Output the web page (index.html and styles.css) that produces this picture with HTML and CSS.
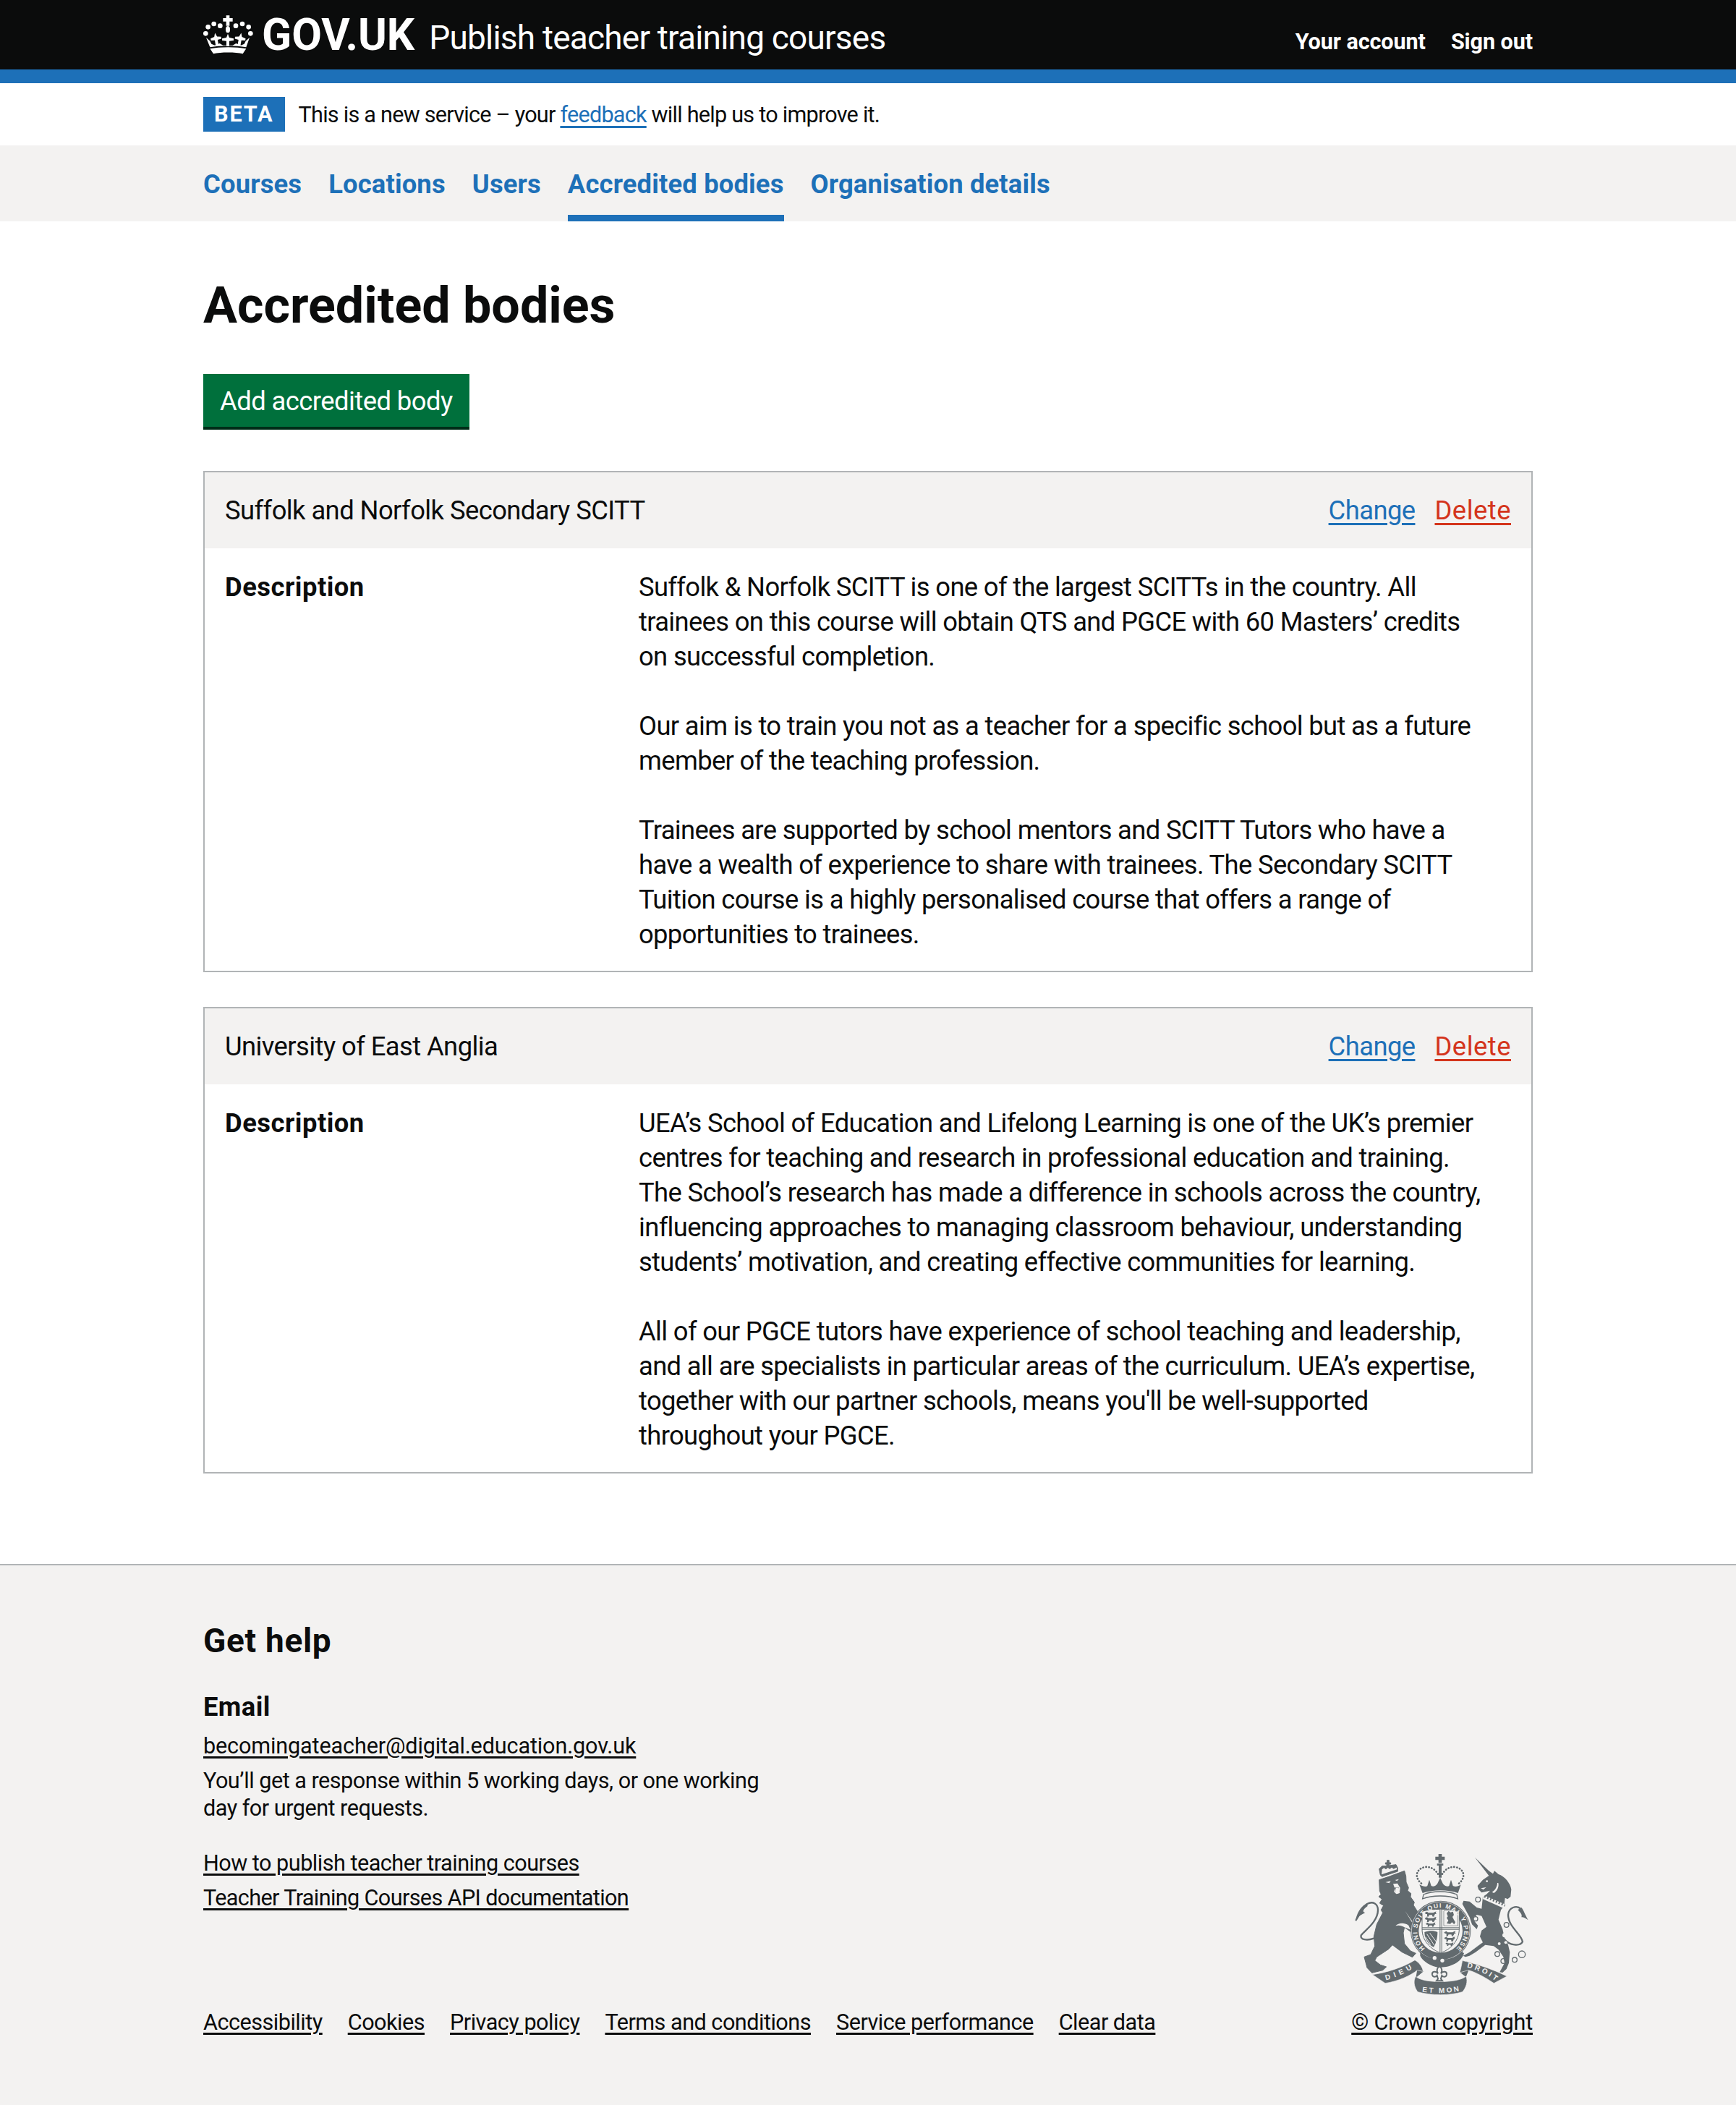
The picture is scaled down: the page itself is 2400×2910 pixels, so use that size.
FILE: index.html
```html
<!DOCTYPE html>
<html lang="en">
<head>
<meta charset="utf-8">
<title>Accredited bodies - Publish teacher training courses - GOV.UK</title>
<link rel="stylesheet" href="styles.css">
</head>
<body>
<header class="site-header">
  <div class="wrap header-inner">
    <div class="brand">
      <svg class="crown" viewBox="18 15 216 168" aria-hidden="true">
        <g fill="#fff">
          <path d="M113 22h14v11h13v14h-13v18h-14V47h-13V33h13z"/>
          <ellipse cx="120" cy="80" rx="9" ry="14"/>
          <circle cx="38" cy="70" r="10"/><circle cx="62" cy="57" r="10"/><circle cx="88" cy="65" r="10"/>
          <circle cx="153" cy="65" r="10"/><circle cx="180" cy="57" r="10"/><circle cx="206" cy="70" r="10"/>
          <circle cx="28" cy="97" r="10"/><circle cx="214" cy="97" r="10"/>
          <path d="M120 98L126 114L144 118V126L126 128V150H114V128L96 126V118L114 114Z"/>
          <path transform="rotate(-10 72 125) translate(-48 -4)" d="M120 98L126 114L142 118V126L126 128V150H114V128L98 126V118L114 114Z"/>
          <path transform="rotate(10 170 125) translate(50 -4)" d="M120 98L126 114L142 118V126L126 128V150H114V128L98 126V118L114 114Z"/>
          <path d="M30 114l16 14 6 12 14 6 20-8 14 8h40l14-8 20 8 14-6 6-12 16-14-14 40c-40-8-110-8-150 0z"/>
          <path d="M46 160c40-8 110-8 150 0l-14 21c-30-7-92-7-122 0z"/>
        </g>
      </svg>
      <span class="logotype">GOV.UK</span>
      <span class="service-name">Publish teacher training courses</span>
    </div>
    <nav class="account-nav">
      <a href="#">Your account</a>
      <a href="#">Sign out</a>
    </nav>
  </div>
  <div class="header-rule"></div>
</header>

<div class="wrap phase">
  <strong class="tag">BETA</strong>
  <span>This is a new service – your <a class="link" href="#">feedback</a> will help us to improve it.</span>
</div>

<nav class="org-nav">
  <div class="wrap org-nav-inner">
    <a href="#">Courses</a>
    <a href="#">Locations</a>
    <a href="#">Users</a>
    <a href="#" class="current">Accredited bodies</a>
    <a href="#">Organisation details</a>
  </div>
</nav>

<main class="wrap main">
  <h1>Accredited bodies</h1>
  <a class="button" href="#">Add accredited body</a>

  <section class="card">
    <div class="card-head">
      <h2>Suffolk and Norfolk Secondary SCITT</h2>
      <div class="card-actions"><a class="link" href="#">Change</a><a class="link danger" href="#">Delete</a></div>
    </div>
    <dl class="card-body">
      <dt>Description</dt>
      <dd>
        <p>Suffolk &amp; Norfolk SCITT is one of the largest SCITTs in the country. All<br>trainees on this course will obtain QTS and PGCE with 60 Masters’ credits<br>on successful completion.</p>
        <p>Our aim is to train you not as a teacher for a specific school but as a future<br>member of the teaching profession.</p>
        <p>Trainees are supported by school mentors and SCITT Tutors who have a<br>have a wealth of experience to share with trainees. The Secondary SCITT<br>Tuition course is a highly personalised course that offers a range of<br>opportunities to trainees.</p>
      </dd>
    </dl>
  </section>

  <section class="card">
    <div class="card-head">
      <h2>University of East Anglia</h2>
      <div class="card-actions"><a class="link" href="#">Change</a><a class="link danger" href="#">Delete</a></div>
    </div>
    <dl class="card-body">
      <dt>Description</dt>
      <dd>
        <p>UEA’s School of Education and Lifelong Learning is one of the UK’s premier<br>centres for teaching and research in professional education and training.<br>The School’s research has made a difference in schools across the country,<br>influencing approaches to managing classroom behaviour, understanding<br>students’ motivation, and creating effective communities for learning.</p>
        <p>All of our PGCE tutors have experience of school teaching and leadership,<br>and all are specialists in particular areas of the curriculum. UEA’s expertise,<br>together with our partner schools, means you'll be well-supported<br>throughout your PGCE.</p>
      </dd>
    </dl>
  </section>
</main>

<footer class="footer">
  <div class="wrap footer-inner">
    <div class="footer-help">
      <h2>Get help</h2>
      <h3>Email</h3>
      <a class="flink flink-email" href="#">becomingateacher@digital.education.gov.uk</a>
      <p>You’ll get a response within 5 working days, or one working<br>day for urgent requests.</p>
      <ul class="footer-docs">
        <li><a class="flink" href="#">How to publish teacher training courses</a></li>
        <li><a class="flink flink-api" href="#">Teacher Training Courses API documentation</a></li>
      </ul>
    </div>
    <div class="footer-meta">
      <ul class="meta-links">
        <li><a class="flink" href="#">Accessibility</a></li>
        <li><a class="flink" href="#">Cookies</a></li>
        <li><a class="flink" href="#">Privacy policy</a></li>
        <li><a class="flink" href="#">Terms and conditions</a></li>
        <li><a class="flink" href="#">Service performance</a></li>
        <li><a class="flink" href="#">Clear data</a></li>
      </ul>
      <div class="copyright">
        <svg class="crest" viewBox="0 0 735 615" aria-hidden="true">
          <defs>
            <path id="garter" d="M300 410A97 97 0 1 1 430 410"/>
            <path id="ban-left" d="M138 541C178 531 215 514 246 494"/>
            <path id="ban-mid" d="M286 589C340 597 392 597 446 585"/>
            <path id="ban-right" d="M474 488C512 496 556 516 588 541"/>
            <symbol id="passant" viewBox="0 0 60 24">
              <path d="M2 6l10-5 6 5h22l8-4 6-2-3 8 5 3-8 1-2 6-4 4 5 2h-10l-2-8H22l-3 8h-9l3-4-1-8-6 0z"/>
            </symbol>
          </defs>

          <!-- lion -->
          <g fill="#626a6e" stroke="#626a6e" stroke-width="3" stroke-linejoin="round">
            <path d="M110 125L150 112L215 88L221 110L222 135L232 158L228 170L242 182L240 196L256 218L252 230L268 255L262 290L275 345L262 352L240 340L215 322L210 345L215 390L240 420L262 430L248 446L205 425L165 395L150 412L100 445L92 460L115 478L140 486L125 500L80 511L60 490L48 445L75 435L92 400L88 360L100 310L125 262L118 250L128 232L112 222L122 205L108 195L118 185L112 172Z"/>
            <path d="M115 105L110 80L122 68H140L142 60H136V54H143V44H151V54H158V60H151V66L180 62L187 76L187 90L122 112Z"/>
          </g>
          <g fill="none" stroke="#626a6e" stroke-width="7" stroke-linecap="round">
            <path d="M88 368C60 378 30 374 35 355C50 335 105 300 105 250C105 225 85 212 60 225C45 235 38 255 14 292"/>
          </g>
          <path fill="#626a6e" d="M60 222C40 232 22 250 12 292C25 275 40 268 52 262C42 258 38 252 62 234Z"/>
          <g fill="#f3f2f1">
            <path d="M122 82l8-6 8 6 8-7 8 6 8-7 8 6 12-6 2 8-64 21z"/>
            <path d="M136 135l22-5-6 9zM176 126l16-4-8 8zM168 142l18-2 11 18-2 22-14 4-10-10 3-16z"/>
            <path d="M218 255L270 330L265 332Z"/>
            <path d="M178 316C190 304 212 300 232 314L240 332L215 322C203 314 190 312 178 316Z"/>
          </g>
          <path fill="#626a6e" d="M172 158l18-3 3 18-8 8-9-6z"/>
          <ellipse cx="185" cy="170" rx="8" ry="13" fill="#f3f2f1"/>

          <!-- crown -->
          <g fill="#626a6e">
            <path d="M356 18h14v11h12v14h-12v12h-14V43h-13V29h13z"/>
            <path d="M350 58h26v8h-7v50h-12V66h-7z"/>
            <path d="M277 145C295 155 305 155 310 150L318 125L326 150C335 155 345 150 352 140L363 116L374 140C380 150 395 155 400 150L408 125L416 150C425 155 435 155 449 145L437 180C395 165 335 165 290 180Z"/>
          </g>
          <path fill="none" stroke="#626a6e" stroke-width="8" stroke-linecap="round" stroke-dasharray="1 11" d="M285 140C255 115 262 80 300 72C325 70 345 82 358 108M441 140C471 115 464 80 426 72C401 70 381 82 368 108"/>
          <path fill="#f3f2f1" stroke="#626a6e" stroke-width="4" d="M294 186C330 170 396 170 432 186L436 204C396 188 330 188 290 204Z"/>

          <!-- garter and shield -->
          <circle cx="365" cy="337" r="125" fill="#626a6e"/>
          <circle cx="365" cy="337" r="121" fill="none" stroke="#f3f2f1" stroke-width="2"/>
          <circle cx="365" cy="337" r="91" fill="#f3f2f1"/>
          <path fill="#626a6e" d="M280 422C310 462 420 470 452 422L462 430C450 470 400 490 360 488C325 486 290 462 280 440Z"/>
          <circle cx="340" cy="449" r="8" fill="#f3f2f1"/>
          <circle cx="372" cy="460" r="8" fill="#f3f2f1"/>
          <path fill="#f3f2f1" stroke="#626a6e" stroke-width="3" d="M288 256C325 244 405 244 442 256V330C442 378 405 415 365 428C325 415 288 378 288 330Z"/>
          <g fill="#626a6e">
            <rect x="361" y="248" width="3" height="178"/>
            <rect x="368" y="248" width="3" height="178"/>
            <rect x="288" y="322" width="154" height="3"/>
            <rect x="288" y="329" width="154" height="3"/>
            <svg x="296" y="256" width="58" height="22" viewBox="0 0 60 24"><use href="#passant"/></svg>
            <svg x="296" y="279" width="58" height="22" viewBox="0 0 60 24"><use href="#passant"/></svg>
            <svg x="302" y="301" width="46" height="20" viewBox="0 0 60 24"><use href="#passant"/></svg>
            <svg x="376" y="337" width="58" height="22" viewBox="0 0 60 24"><use href="#passant"/></svg>
            <svg x="378" y="360" width="52" height="22" viewBox="0 0 60 24"><use href="#passant"/></svg>
            <svg x="384" y="383" width="38" height="18" viewBox="0 0 60 24"><use href="#passant"/></svg>
            <path d="M390 264l8-10 8 6 10-3 4 14-6 8 6 12 6 10-5 9-9-9-7 7-15-2 7-12-7-11 5-6z"/>
            <path d="M298 342C318 334 340 336 352 342C352 368 345 390 336 404C316 396 298 372 298 342Z"/>
          </g>
          <path fill="none" stroke="#f3f2f1" stroke-width="3" d="M308 350L338 396M320 346L348 384M302 362L324 394"/>
          <path fill="none" stroke="#626a6e" stroke-width="2" d="M378 254C395 250 420 250 436 258V316H378Z"/>

          <!-- ribbons -->
          <path fill="#626a6e" d="M268 498L294 505L262 532ZM444 508L470 528L482 498Z"/>
          <g fill="#626a6e" stroke="#f3f2f1" stroke-width="2">
            <path d="M262 525C285 555 440 555 470 525C480 545 470 575 455 590C400 606 330 606 270 590C255 570 250 545 262 525Z"/>
            <path d="M82 518C140 510 210 488 258 458C275 466 292 490 292 505L268 500C240 522 190 546 135 554Z"/>
            <path d="M455 460C500 470 582 495 640 525L586 554C550 530 510 508 480 500L444 510C450 490 452 475 455 460Z"/>
          </g>
          <path fill="#f3f2f1" stroke="#626a6e" stroke-width="6" d="M360 482C372 494 372 506 366 514C374 502 392 504 390 518C388 530 376 530 370 522L366 536L372 544H348L354 536L350 522C344 530 332 530 330 518C328 504 346 502 354 514C348 506 348 494 360 482Z"/>

          <!-- unicorn -->
          <g transform="translate(360 0)">
            <g fill="#626a6e">
              <path d="M147 32L205 88L222 100L228 88L245 102C270 110 295 140 298 165L295 195L283 205L272 200L268 235L255 250L245 290L262 330L270 365L285 395L292 425L288 470L278 495L262 510L250 508L270 470L265 445L245 415L225 400L190 395L150 425L125 440L108 445L98 440L125 425L165 395L180 385L168 360L175 335L195 320L175 275L155 270L140 290L160 315L155 330L135 310L125 280L115 262L95 225L100 212L125 215L155 240L175 245L180 195L195 185L210 170L175 178L162 165L158 150L180 125L205 108Z"/>
              <path d="M340 240C350 252 355 270 368 292C355 284 350 280 340 280C345 270 335 260 325 250Z"/>
            </g>
            <path fill="none" stroke="#626a6e" stroke-width="7" d="M270 372C290 398 335 402 345 382C340 350 285 320 285 270C287 240 320 228 338 246"/>
            <g fill="#f3f2f1">
              <path d="M182 188L275 228L268 244L180 205Z"/>
              <circle cx="197" cy="131" r="4"/>
              <path d="M172 160l22-4-12 10z"/>
              <path d="M240 138C240 152 232 168 218 176L226 180C240 172 248 152 244 138Z"/>
              <circle cx="270" cy="355" r="9"/><circle cx="248" cy="390" r="6"/><circle cx="275" cy="385" r="6"/>
              <circle cx="150" cy="287" r="10"/><circle cx="160" cy="207" r="10"/><circle cx="278" cy="312" r="10"/>
            </g>
            <path fill="none" stroke="#626a6e" stroke-width="9" stroke-dasharray="6 7" d="M186 194L272 232"/>
            <g fill="none" stroke="#626a6e" stroke-width="4">
              <circle cx="150" cy="287" r="9"/>
              <circle cx="160" cy="207" r="10"/>
              <circle cx="278" cy="312" r="10"/>
              <circle cx="240" cy="433" r="10"/>
              <circle cx="265" cy="462" r="10"/>
              <circle cx="312" cy="457" r="10"/>
              <circle cx="342" cy="434" r="14"/>
            </g>
          </g>

          <g class="crest-text">
            <text class="garter-text"><textPath href="#garter" textLength="467" lengthAdjust="spacing">HONI SOIT QUI MAL Y PENSE</textPath></text>
            <text><textPath href="#ban-left" textLength="120" lengthAdjust="spacing">DIEU</textPath></text>
            <text><textPath href="#ban-mid" textLength="155" startOffset="2" lengthAdjust="spacing">ET MON</textPath></text>
            <text><textPath href="#ban-right" textLength="132" lengthAdjust="spacing">DROIT</textPath></text>
          </g>
        </svg>
        <a class="flink flink-copy" href="#">© Crown copyright</a>
      </div>
    </div>
  </div>
</footer>
</body>
</html>
```
FILE: styles.css
```css
* { box-sizing: border-box; }
html, body { margin: 0; padding: 0; }
body {
  font-family: Roboto, Arial, sans-serif;
  font-size: 36.4px;
  line-height: 48px;
  letter-spacing: -0.58px;
  color: #0b0c0c;
  background: #fff;
}
p, h1, h2, h3, ul, dl, dd { margin: 0; padding: 0; }
ul { list-style: none; }
.wrap { width: 1838px; margin: 0 auto; }

.site-header { background: #0b0c0c; color: #fff; }
.header-inner { height: 96px; display: flex; justify-content: space-between; align-items: flex-start; }
.header-rule { height: 19px; background: #1d70b8; }
.brand { display: flex; align-items: flex-start; padding-top: 19px; }
.crown { width: 72px; height: 56px; margin-right: 9px; }
.logotype { font-size: 60.5px; font-weight: 700; line-height: 60px; letter-spacing: 0; margin-right: 20px; }
.service-name { font-size: 46px; line-height: 66px; letter-spacing: -0.8px; }
.account-nav { display: flex; gap: 35px; padding-top: 38px; }
.account-nav a { color: #fff; font-size: 30.6px; line-height: 40px; font-weight: 700; letter-spacing: -0.1px; text-decoration: none; }

.phase { height: 86px; display: flex; align-items: center; gap: 19px; font-size: 30.6px; letter-spacing: -0.75px; }
.phase span { padding-top: 2px; }
.tag { background: #1d70b8; color: #fff; font-size: 30.6px; line-height: 48px; height: 48px; padding: 0 15px; letter-spacing: 1.9px; }
.link { color: #1d70b8; text-decoration: underline; text-underline-offset: 5px; }

.org-nav { background: #f3f2f1; }
.org-nav-inner { height: 105px; display: flex; gap: 37px; }
.org-nav a { color: #1d70b8; font-weight: 700; letter-spacing: 0.15px; text-decoration: none; line-height: 100px; height: 105px; padding-top: 4px; }
.org-nav a.current { border-bottom: 9px solid #1d70b8; }

.main { padding-top: 72px; padding-bottom: 125px; }
h1 { font-size: 70px; line-height: 88px; font-weight: 700; letter-spacing: 0; margin-bottom: 51px; }
.button {
  display: inline-block;
  height: 77px;
  padding: 0 23px;
  background: #00703c;
  border-bottom: 4px solid #002d18;
  color: #fff;
  font-size: 36.4px;
  line-height: 75px;
  letter-spacing: -0.55px;
  text-decoration: none;
}
.card { border: 2px solid #b1b4b6; margin-top: 57px; }
.card + .card { margin-top: 48px; }
.card-head {
  height: 105px;
  background: #f3f2f1;
  padding: 0 28px;
  display: flex;
  justify-content: space-between;
  align-items: center;
}
.card-head h2 { font-size: 36.4px; line-height: 48px; font-weight: 400; }
.card-actions { display: flex; gap: 27px; }
.danger { color: #d4351c; letter-spacing: 0.5px; }
.card-body { display: grid; grid-template-columns: 572px 1fr; padding: 30px 28px 26px; margin: 0; }
dt { font-weight: 700; letter-spacing: 0.5px; }
dd p { white-space: nowrap; letter-spacing: -0.66px; }
dd p + p { margin-top: 48px; }

.footer { background: #f3f2f1; border-top: 2px solid #b1b4b6; font-size: 30.6px; line-height: 38px; letter-spacing: -0.5px; height: 748px; }
.footer-inner { display: flex; flex-direction: column; justify-content: space-between; height: 100%; padding-top: 74px; padding-bottom: 95px; }
.footer-help h2 { font-size: 46px; line-height: 60px; font-weight: 700; letter-spacing: 0.7px; margin-bottom: 38px; }
.footer-help h3 { font-size: 36.4px; line-height: 48px; font-weight: 700; letter-spacing: 0.4px; margin-bottom: 11px; }
.footer-help p { margin-top: 10px; }
.footer-docs { margin-top: 38px; display: flex; flex-direction: column; gap: 10px; }
.flink { color: #0b0c0c; text-decoration: underline; text-underline-offset: 4px; }
.flink-email { letter-spacing: -0.14px; }
.flink-api { letter-spacing: -0.62px; }
.flink-copy { letter-spacing: -0.15px; }
.footer-meta { display: flex; justify-content: space-between; align-items: flex-end; margin-top: -100px; }
.meta-links { display: flex; gap: 35px; }
.copyright { display: flex; flex-direction: column; align-items: flex-end; gap: 15px; }
.crest { width: 245px; height: 205px; display: block; margin-right: 4px; }
.crest-text text { font-family: "Liberation Sans", Arial, sans-serif; font-size: 30px; font-weight: 700; fill: #f3f2f1; letter-spacing: 0; }
.crest-text .garter-text { font-size: 26px; }
```
